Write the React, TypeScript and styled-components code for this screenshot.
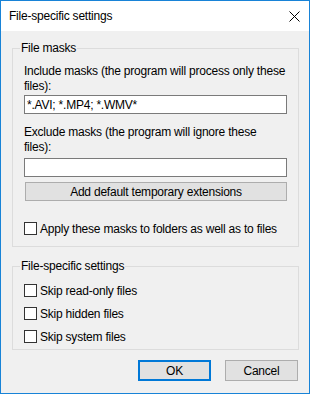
import styled, { createGlobalStyle } from 'styled-components';

const GlobalStyle = createGlobalStyle`
  body {
    margin: 0;
    background: #ffffff;
    font-family: 'Liberation Sans', Arial, sans-serif;
    font-size: 12px;
    letter-spacing: -0.22px;
    color: #000000;
  }
`;

const Window = styled.div`
  width: 310px;
  height: 394px;
  box-sizing: border-box;
  border: 1px solid #1883d7;
  background: #f0f0f0;
  display: flex;
  flex-direction: column;
`;

const TitleBar = styled.div`
  height: 30px;
  background: #ffffff;
  display: flex;
  align-items: center;
  justify-content: space-between;
  padding: 0 9px 0 8px;
`;

const CloseIcon = styled.svg`
  width: 11px;
  height: 11px;
`;

const Body = styled.div`
  flex: 1;
  padding: 9px 10px 0 11px;
  display: flex;
  flex-direction: column;
`;

const Group = styled.fieldset<{ $top: number; $pad: string }>`
  margin: ${(p) => p.$top}px 0 0 0;
  padding: ${(p) => p.$pad};
  border: 1px solid #dcdcdc;
  min-width: 0;
  display: flex;
  flex-direction: column;
`;

const Legend = styled.legend`
  line-height: 16px;
  padding: 0 1px;
  margin-left: -4px;
`;

const Label = styled.div<{ $top?: number }>`
  margin-top: ${(p) => p.$top ?? 0}px;
  line-height: 15px;
`;

const TextBox = styled.input<{ $top: number }>`
  margin-top: ${(p) => p.$top}px;
  height: 19px;
  box-sizing: border-box;
  border: 1px solid #7a7a7a;
  background: #ffffff;
  padding: 0 2px;
  font: inherit;
  letter-spacing: inherit;
  color: #000000;
  outline: none;
`;

const WideButton = styled.button`
  margin: 5px 0 0 1px;
  height: 19px;
  border: 1px solid #adadad;
  background: #e1e1e1;
  font: inherit;
  letter-spacing: inherit;
  color: #000000;
  padding: 0;
`;

const CheckRow = styled.label<{ $top: number }>`
  margin-top: ${(p) => p.$top}px;
  display: flex;
  align-items: center;
  gap: 3px;
  height: 13px;
  white-space: nowrap;
`;

const Box = styled.input`
  appearance: none;
  margin: 0;
  width: 13px;
  height: 13px;
  border: 1px solid #333333;
  background: #ffffff;
  flex: none;
`;

const Footer = styled.div`
  display: flex;
  justify-content: flex-end;
  gap: 14px;
  margin-top: 10px;
  padding-right: 1px;
`;

const DialogButton = styled.button<{ $default?: boolean }>`
  width: 73px;
  height: 21px;
  box-sizing: border-box;
  border: ${(p) => (p.$default ? '2px solid #0078d7' : '1px solid #adadad')};
  background: #e1e1e1;
  font: inherit;
  letter-spacing: inherit;
  color: #000000;
  padding: 0;
`;

const skipItems = ['Skip read-only files', 'Skip hidden files', 'Skip system files'];

function App() {
  return (
    <Window>
      <GlobalStyle />
      <TitleBar>
        <span>File-specific settings</span>
        <CloseIcon viewBox="0 0 11 11">
          <path d="M0.5 0.5 L10.5 10.5 M10.5 0.5 L0.5 10.5" stroke="#000" strokeWidth="1" fill="none" />
        </CloseIcon>
      </TitleBar>
      <Body>
        <Group $top={0} $pad="8px 11px 11px 11px">
          <Legend>File masks</Legend>
          <Label>
            Include masks (the program will process only these
            <br />
            files):
          </Label>
          <TextBox $top={1} defaultValue="*.AVI; *.MP4; *.WMV*" />
          <Label $top={11}>
            Exclude masks (the program will ignore these
            <br />
            files):
          </Label>
          <TextBox $top={3} defaultValue="" />
          <WideButton>Add default temporary extensions</WideButton>
          <CheckRow $top={21}>
            <Box type="checkbox" />
            Apply these masks to folders as well as to files
          </CheckRow>
        </Group>
        <Group $top={11} $pad="0 11px 6px 11px">
          <Legend>File-specific settings</Legend>
          {skipItems.map((item) => (
            <CheckRow key={item} $top={10}>
              <Box type="checkbox" />
              {item}
            </CheckRow>
          ))}
        </Group>
        <Footer>
          <DialogButton $default>OK</DialogButton>
          <DialogButton>Cancel</DialogButton>
        </Footer>
      </Body>
    </Window>
  );
}

export default App;
